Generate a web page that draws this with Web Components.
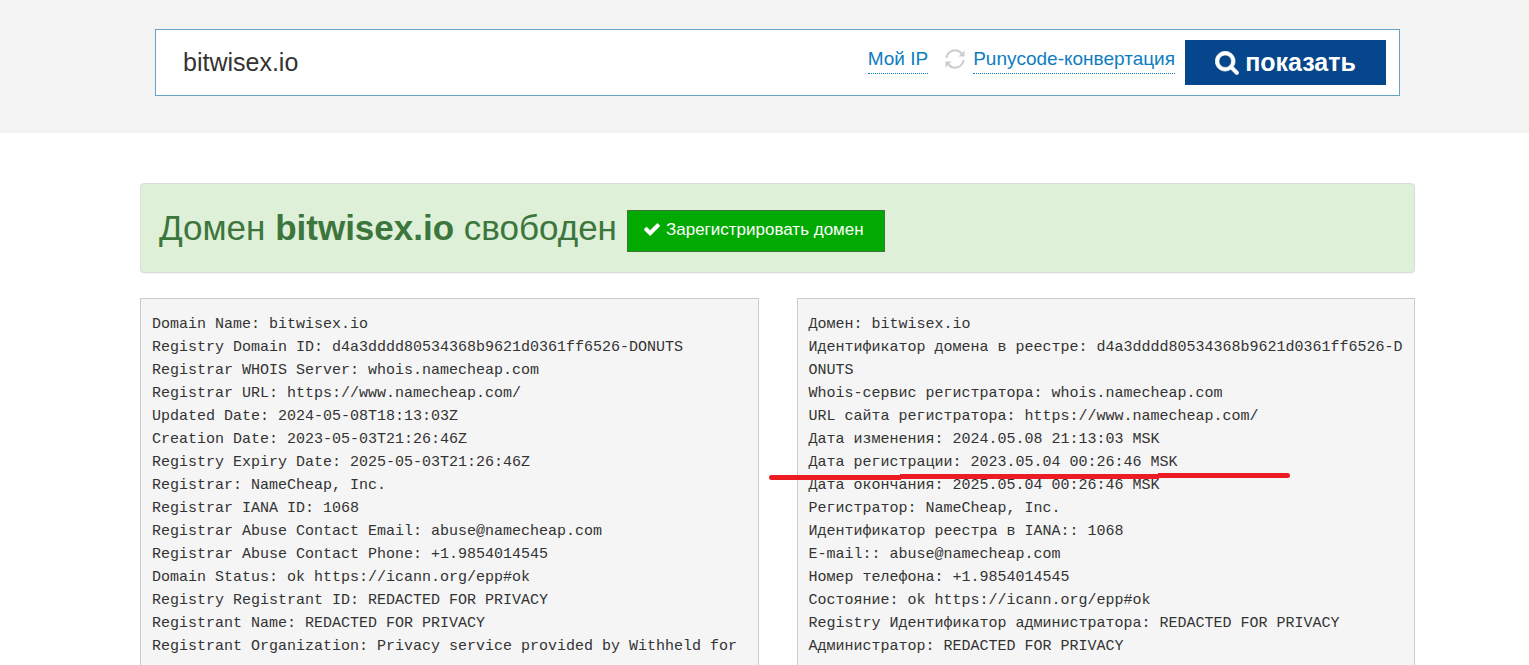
<!DOCTYPE html>
<html lang="ru">
<head>
<meta charset="utf-8">
<meta name="viewport" content="width=device-width, initial-scale=1">
<title>Whois bitwisex.io</title>
<style>
body { margin: 0; background: #fff; font-family: "Liberation Sans", Arial, sans-serif; color: #333; }
</style>
</head>
<body>
<whois-page>
  <whois-search slot="search" domain="bitwisex.io"></whois-search>
  <domain-status domain="bitwisex.io"></domain-status>
  <whois-columns>
    <whois-record>Domain Name: bitwisex.io
Registry Domain ID: d4a3dddd80534368b9621d0361ff6526-DONUTS
Registrar WHOIS Server: whois.namecheap.com
Registrar URL: https://www.namecheap.com/
Updated Date: 2024-05-08T18:13:03Z
Creation Date: 2023-05-03T21:26:46Z
Registry Expiry Date: 2025-05-03T21:26:46Z
Registrar: NameCheap, Inc.
Registrar IANA ID: 1068
Registrar Abuse Contact Email: abuse@namecheap.com
Registrar Abuse Contact Phone: +1.9854014545
Domain Status: ok https://icann.org/epp#ok
Registry Registrant ID: REDACTED FOR PRIVACY
Registrant Name: REDACTED FOR PRIVACY
Registrant Organization: Privacy service provided by Withheld for</whois-record>
    <whois-record>Домен: bitwisex.io
Идентификатор домена в реестре: d4a3dddd80534368b9621d0361ff6526-DONUTS
Whois-сервис регистратора: whois.namecheap.com
URL сайта регистратора: https://www.namecheap.com/
Дата изменения: 2024.05.08 21:13:03 MSK
Дата регистрации: 2023.05.04 00:26:46 MSK
Дата окончания: 2025.05.04 00:26:46 MSK
Регистратор: NameCheap, Inc.
Идентификатор реестра в IANA:: 1068
E-mail:: abuse@namecheap.com
Номер телефона: +1.9854014545
Состояние: ok https://icann.org/epp#ok
Registry Идентификатор администратора: REDACTED FOR PRIVACY
Администратор: REDACTED FOR PRIVACY<red-marker slot="mark"></red-marker></whois-record>
  </whois-columns>
</whois-page>

<script>
const define = (name, html, setup) => customElements.define(name, class extends HTMLElement {
  constructor() {
    super();
    this.attachShadow({ mode: 'open' }).innerHTML = html;
  }
  connectedCallback() { if (setup) setup(this, this.shadowRoot); }
});

define('whois-page', `
<style>
  :host { display: flex; flex-direction: column; height: 100vh; overflow: hidden; }
  header { background: #f3f3f3; padding: 29px 129px 37px 155px; }
  main { padding: 50px 114px 0 140px; display: grid; gap: 25px; }
</style>
<header><slot name="search"></slot></header>
<main><slot></slot></main>`);

define('search-icon', `
<style>:host { display: inline-flex; } svg { width: 24px; height: 24px; display: block; }</style>
<svg viewBox="-25 -25 1714 1714" aria-hidden="true"><path fill="currentColor" stroke="currentColor" stroke-width="50" d="M1152 704q0-185-131.500-316.500t-316.500-131.500-316.500 131.500-131.500 316.500 131.500 316.500 316.500 131.500 316.500-131.500 131.500-316.500zM1664 1536q0 52-38 90t-90 38q-54 0-90-38l-343-342q-179 124-399 124-143 0-273.500-55.500t-225-150-150-225-55.500-273.500 55.500-273.500 150-225 225-150 273.500-55.500 273.500 55.500 225 150 150 225 55.500 273.500q0 220-124 399l343 343q37 37 37 90z"/></svg>`);

define('check-icon', `
<style>:host { display: inline-flex; } svg { width: 16px; height: 13px; display: block; }</style>
<svg viewBox="-20 -20 1590 1228" aria-hidden="true"><path fill="currentColor" stroke="currentColor" stroke-width="40" d="M1550 232q0 40-28 68l-724 724-136 136q-28 28-68 28t-68-28l-136-136-362-362q-28-28-28-68t28-68l136-136q28-28 68-28t68 28l294 295 656-657q28-28 68-28t68 28l136 136q28 28 28 68z"/></svg>`);

define('refresh-icon', `
<style>:host { display: inline-flex; color: #ccc; } svg { width: 20px; height: 20px; display: block; }</style>
<svg viewBox="0 0 20 20" fill="none" stroke="currentColor" stroke-width="2" aria-hidden="true">
  <path d="M1.500 9A8.500 8.500 0 0 1 16.500 4.500M18.500 11A8.500 8.500 0 0 1 3.500 15.500"/>
  <path fill="currentColor" stroke="none" d="M19.500 1.500V7.500H13.500ZM.5 18.500V12.500H6.500Z"/>
</svg>`);

define('whois-search', `
<style>
  form { display: flex; align-items: center; height: 65px; border: 1px solid #66a3c7; background: #fff; padding-right: 13px; }
  input { flex: 1; min-width: 0; align-self: stretch; border: 0; outline: 0; padding: 0 27px; background: none; font: 25px "Liberation Sans", Arial, sans-serif; color: #333; }
  nav { display: flex; align-items: center; font-size: 19px; margin: 0 10px 6px 0; }
  a { color: #0e7dc0; text-decoration: none; line-height: 28px; border-bottom: 1px dotted currentColor; white-space: nowrap; }
  refresh-icon { margin: 0 8px 2px 17px; }
  button { display: flex; align-items: center; justify-content: center; gap: 6px; width: 201px; height: 45px; border: 0; padding: 0; background: #05468c; color: #fff; font: bold 25px "Liberation Sans", Arial, sans-serif; }
</style>
<form onsubmit="return false">
  <input type="text" aria-label="Домен">
  <nav><a href="#ip">Мой IP</a><refresh-icon></refresh-icon><a href="#punycode">Punycode-конвертация</a></nav>
  <button type="submit"><search-icon></search-icon>показать</button>
</form>`, (el, root) => { root.querySelector('input').value = el.getAttribute('domain'); });

define('domain-status', `
<style>
  :host { display: flex; align-items: center; gap: 10px; box-sizing: border-box; height: 90px; padding: 5px 18px 0; background: #dff0d8; border: 1px solid #dcdcdc; border-radius: 4px; box-shadow: 0 1px 1px rgba(0,0,0,.05); }
  h1 { margin: 0; padding-bottom: 6px; font-size: 35px; font-weight: 400; line-height: 40px; color: #3c763d; white-space: nowrap; }
  a { display: flex; align-items: center; gap: 6px; box-sizing: border-box; height: 42px; padding: 0 20px 2px 16px; border: 1px solid #3c763d; background: #0a0; color: #fff; font-size: 17px; text-decoration: none; white-space: nowrap; }
</style>
<h1>Домен <strong></strong> свободен</h1>
<a href="#register"><check-icon></check-icon>Зарегистрировать домен</a>`,
(el, root) => { root.querySelector('strong').textContent = el.getAttribute('domain'); });

define('whois-columns', `
<style>:host { display: grid; grid-template-columns: 1fr 1fr; gap: 38px; }</style>
<slot></slot>`);

define('whois-record', `
<style>
  :host { display: block; position: relative; border: 1px solid #ccc; background: #f5f5f5; padding: 14px 10px 40px 11px; }
  pre { margin: 0; font: 15px/23px "Liberation Mono", Consolas, monospace; white-space: pre-wrap; word-break: break-all; }
</style>
<pre><slot></slot></pre><slot name="mark"></slot>`);

define('red-marker', `
<style>
  :host { display: block; position: absolute; left: -29px; top: 174px; }
  svg { display: block; width: 521px; height: 8px; }
</style>
<svg viewBox="0 0 521 8" fill="none" stroke="#ed1c24" stroke-width="5" aria-hidden="true">
  <path d="M3 4.500H132M131 3.500H390M389 2.500H518"/>
  <path stroke-linecap="round" d="M2.500 4.500H9M512 2.500H518.500"/>
</svg>`);
</script>
</body>
</html>
